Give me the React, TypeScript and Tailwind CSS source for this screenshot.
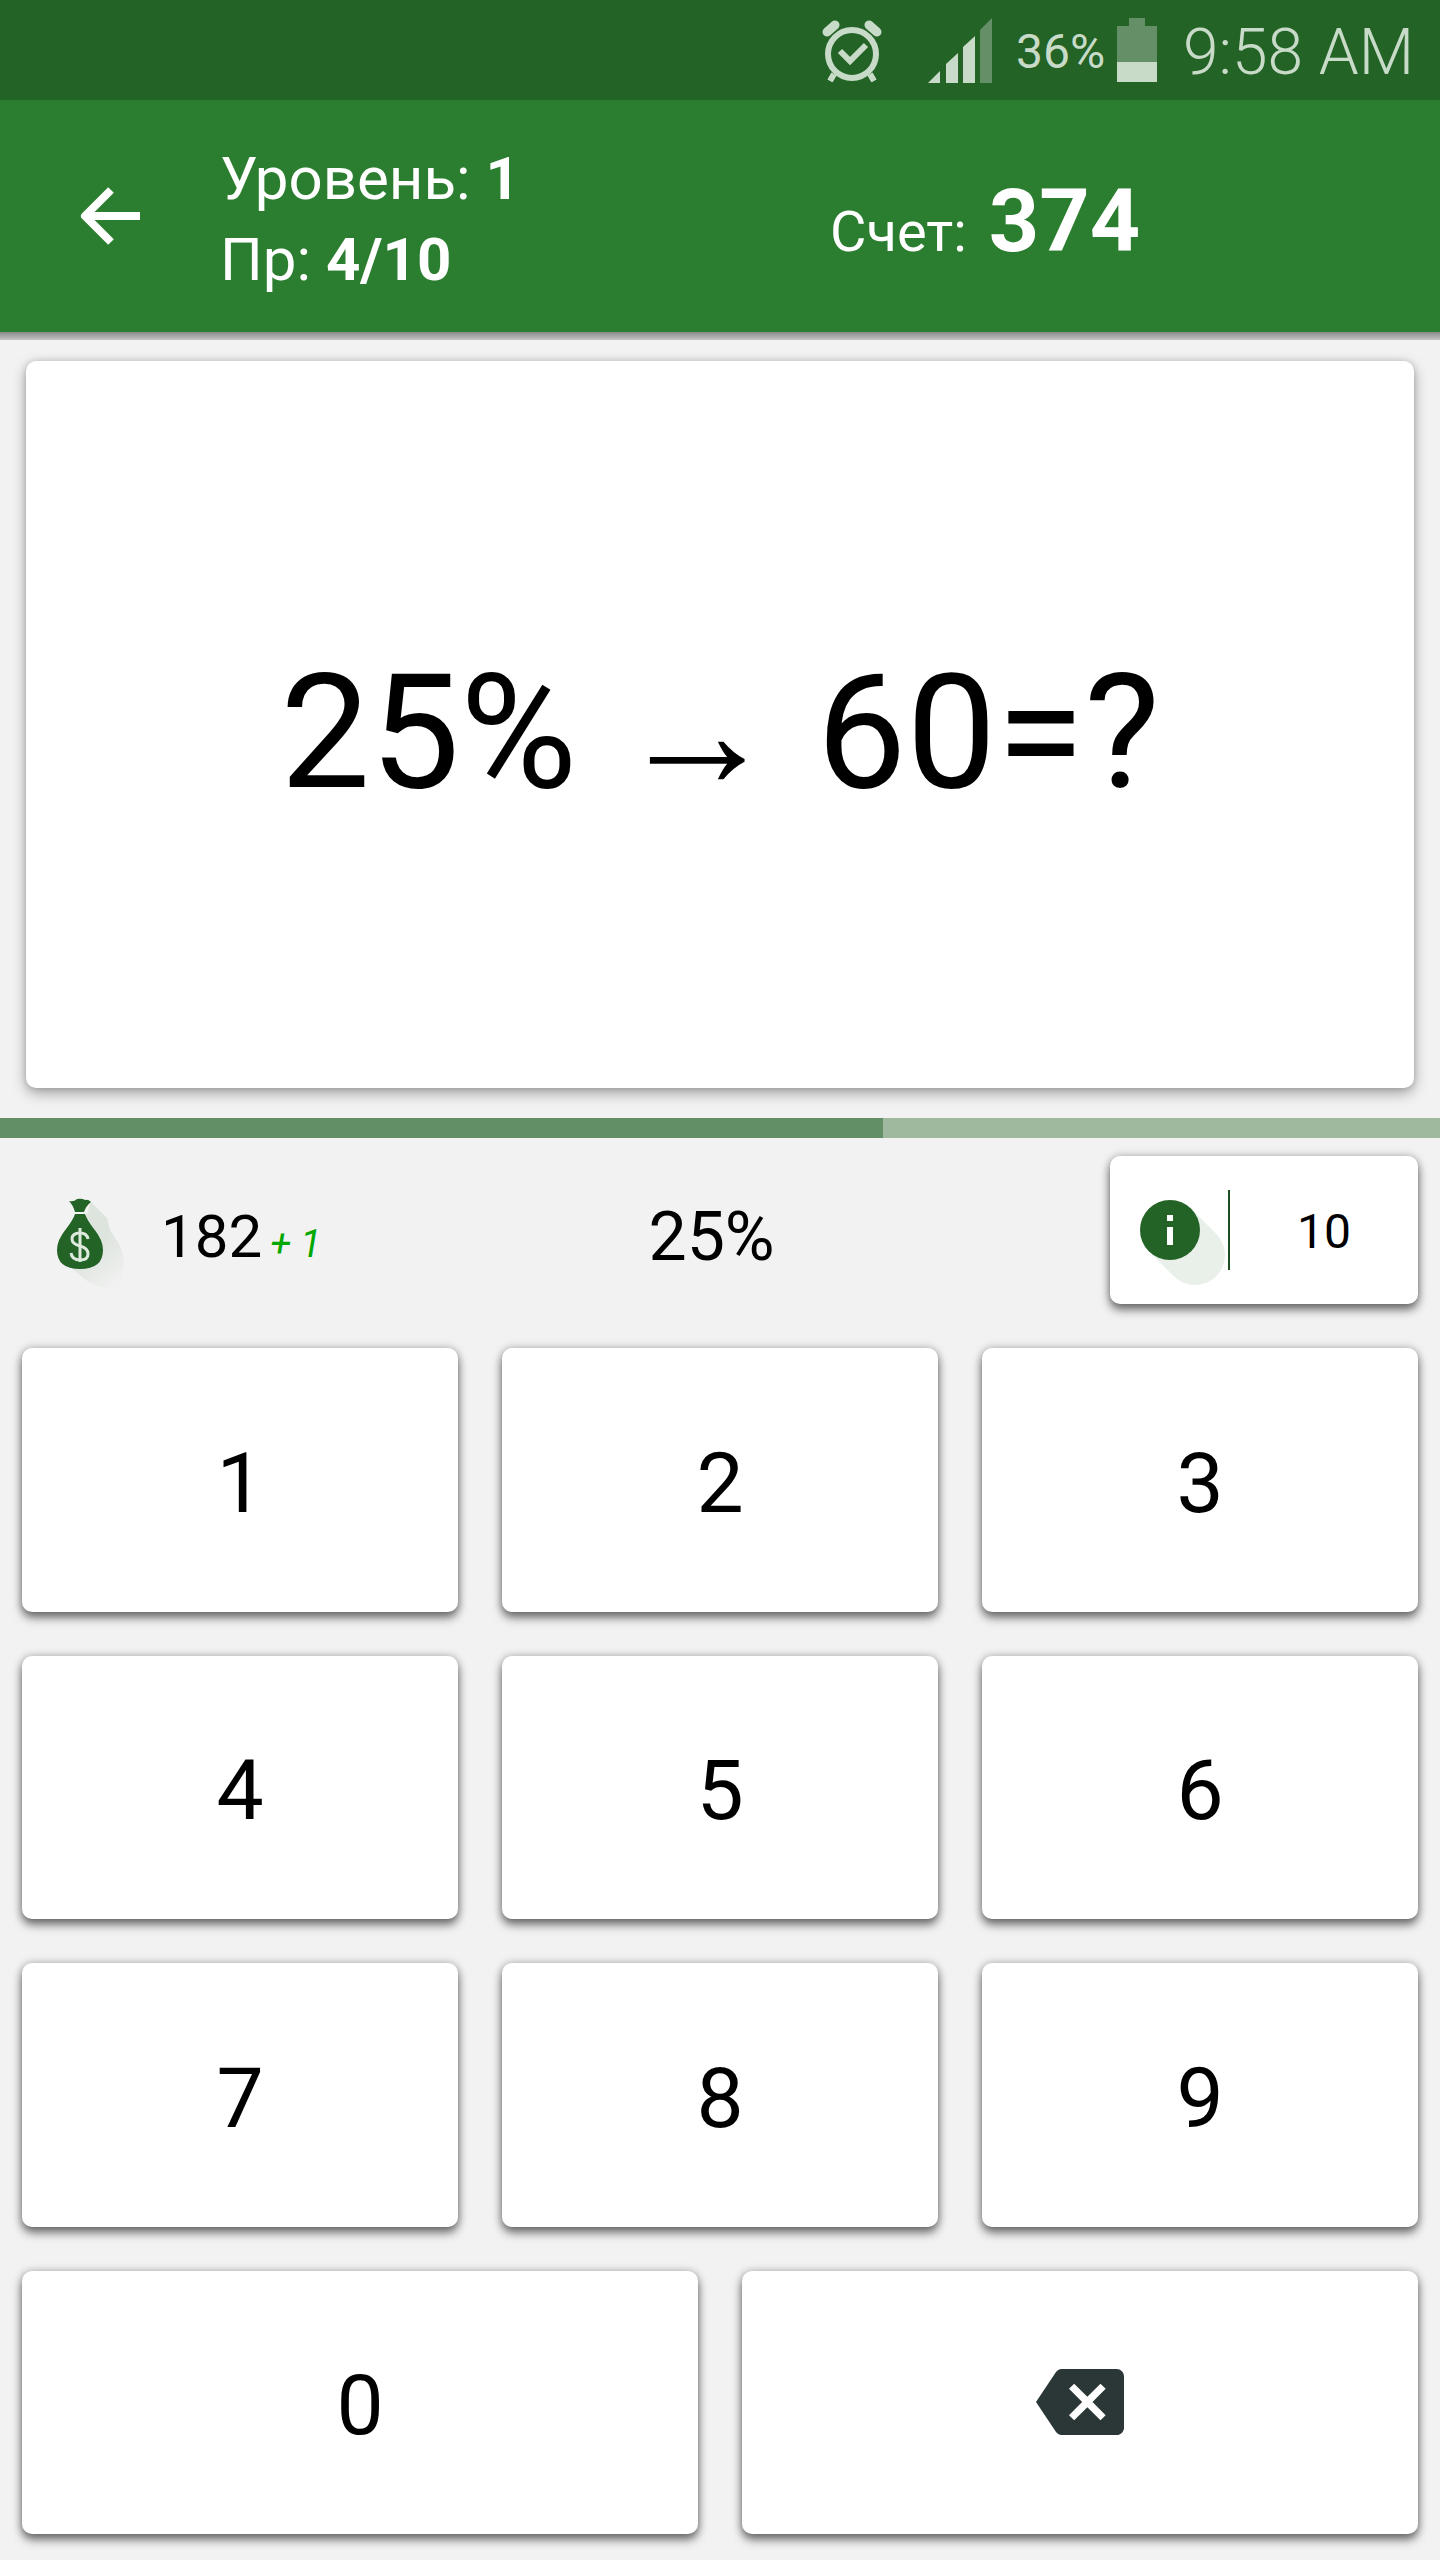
import React, { useState } from 'react';
import { MdBackspace } from 'react-icons/md';

const DIGITS = ["1", "2", "3", "4", "5", "6", "7", "8", "9"];

const KEY_CLASS = "flex items-center justify-center bg-white rounded-[10px] text-[84px] leading-none shadow-[0_6px_10px_rgba(0,0,0,0.5),0_0_8px_rgba(0,0,0,0.26)] active:bg-gray-100";

function AlarmIcon() {
  return (
    <svg width="60" height="64" viewBox="0 0 60 64" fill="none" stroke="#c8dac8" aria-hidden="true">
      <ellipse cx="30" cy="36" rx="24" ry="24" strokeWidth="6" />
      <path d="M18 33l10 10 16-16" strokeWidth="6" />
      <path d="M12 56l-4 7M48 56l4 7" strokeWidth="6" />
      <path d="M5 14L13 7M55 14L47 7" strokeWidth="9" strokeLinecap="round" />
    </svg>
  );
}

function SignalIcon() {
  return (
    <svg width="64" height="65" viewBox="0 0 64 65" fill="#c8dac8" aria-hidden="true">
      <path d="M0 65L12 53V65Z" />
      <path d="M18 65V46L30 35V65Z" />
      <path d="M35 65V29L47 18V65Z" />
      <path d="M52 65V12L64 0V65Z" fill="#648f67" />
    </svg>
  );
}

function BatteryIcon() {
  return (
    <svg width="40" height="64" viewBox="0 0 40 64" aria-hidden="true">
      <path d="M12 0H28V8H40V44H0V8H12Z" fill="#648f67" />
      <path d="M0 44H40V64H0Z" fill="#c8dac8" />
    </svg>
  );
}

function MoneyBagIcon() {
  return (
    <svg width="76" height="124" viewBox="0 0 76 124" aria-hidden="true">
      <defs>
        <linearGradient id="bagShade" x1="24" y1="66" x2="62" y2="112" gradientUnits="userSpaceOnUse">
          <stop offset="0.3" stopColor="#236326" stopOpacity="0.1" />
          <stop offset="1" stopColor="#236326" stopOpacity="0.01" />
        </linearGradient>
      </defs>
      <path d="M34 34L50 50L53 62L62 76Q72 96 62 119Q44 122 30 113L12 98Z" fill="url(#bagShade)" />
      <path d="M12 33Q17 34 20 31Q25 30 28 32Q31 31 34 34Q29 38 27 44H18Q16 37 12 33Z" fill="#236326" />
      <path d="M18 46H28Q30 52 37 61Q46 72 46 82Q46 101 23 101Q0 101 0 82Q0 72 9 61Q16 52 18 46Z" fill="#236326" />
      <g fill="none" stroke="#dfeade" strokeWidth="3">
        <path d="M31 71Q30 65 23 65Q15 65 15 71Q15 76 23 78Q31 80 31 86Q31 92 23 92Q15 92 14 85" />
        <path d="M23 60V94" />
      </g>
    </svg>
  );
}

function InfoIcon() {
  return (
    <svg width="86" height="116" viewBox="0 0 86 116" aria-hidden="true">
      <path d="M30 58L55 83" stroke="#e8f0e9" strokeWidth="60" strokeLinecap="round" />
      <circle cx="30" cy="58" r="30" fill="#236326" />
      <path d="M27 43H33V49H27ZM27 55H33V73H27Z" fill="#fff" />
    </svg>
  );
}

export default function App() {
  const [answer, setAnswer] = useState("25%");
  const progress = 61.3;

  const pressDigit = (digit: string) => {
    setAnswer(prev => (prev === "25%" ? digit : prev + digit));
  };

  return (
    <div className="min-h-screen flex flex-col bg-[#f2f2f2] text-black font-['Roboto',sans-serif]">
      {/* Status bar */}
      <div className="h-[100px] flex items-center justify-end pr-[26px] bg-[#236326] text-[#c8dac8]">
        <AlarmIcon />
        <div className="ml-[46px]"><SignalIcon /></div>
        <span className="ml-6 pt-1 text-[48px] leading-none">36%</span>
        <div className="ml-3"><BatteryIcon /></div>
        <span className="ml-[26px] pt-1.5 text-[64px] leading-none font-light">9:58 AM</span>
      </div>

      {/* App bar */}
      <header className="h-[232px] flex items-center pl-20 bg-[#2b7e2f] text-white">
        <button type="button" aria-label="Назад" className="w-[60px] mr-20">
          <svg width="60" height="60" viewBox="0 0 60 60" fill="none" stroke="#fff" strokeWidth="8" aria-hidden="true">
            <path d="M31 4L5 30L31 56" strokeLinejoin="round" />
            <path d="M6 30H60" />
          </svg>
        </button>
        <div className="flex-1 pt-1.5 text-[60px] leading-[81px]">
          <p>Уровень: <b>1</b></p>
          <p>Пр: <b>4/10</b></p>
        </div>
        <div className="flex-1 flex items-baseline gap-[22px] pt-5 leading-[88px]">
          <span className="text-[56px]">Счет:</span>
          <b className="text-[88px]">374</b>
        </div>
      </header>
      <div className="h-2 bg-linear-to-b from-[#8a8a8a] to-[#c4c4c4]" />

      {/* Question */}
      <main className="flex-1 flex flex-col">
        <div className="h-[727px] flex items-center justify-center mt-[21px] mx-[26px] pt-4 bg-white rounded-[10px] text-[160px] leading-none shadow-[0_5px_14px_rgba(0,0,0,0.34),0_0_6px_rgba(0,0,0,0.14)]">
          <p>25% <span className="font-['Liberation_Serif',serif]">→</span> 60=?</p>
        </div>

        <div role="progressbar" aria-label="Время" aria-valuenow={progress} className="h-5 mt-[30px] bg-[#9fb99f]">
          <div className="h-full bg-[#628f66]" style={{ width: `${progress}%` }} />
        </div>

        {/* Coins, current answer, hint */}
        <div className="flex items-center mt-[18px] mb-11 pl-[57px] pr-[22px]">
          <MoneyBagIcon />
          <p className="ml-7 pt-3.5 text-[60px] leading-none">
            182<i className="ml-2 text-[38px] text-[#00a800]">+ 1</i>
          </p>
          <p className="flex-1 pt-3.5 pr-2 text-center text-[68px] leading-none">{answer}</p>
          <button type="button" className="w-[308px] h-[148px] flex items-center pl-[30px] bg-white rounded-[10px] text-[48px] leading-none shadow-[0_6px_10px_rgba(0,0,0,0.5),0_0_8px_rgba(0,0,0,0.26)]">
            <InfoIcon />
            <span className="w-0.5 h-20 ml-0.5 bg-[#1c4d20]" />
            <span className="flex-1 pt-1 text-center">10</span>
          </button>
        </div>

        {/* Keypad */}
        <div className="flex-1 grid grid-cols-6 auto-rows-fr gap-11 mx-[22px] mb-[26px]">
          {DIGITS.map(digit => (
            <button key={digit} type="button" onClick={() => pressDigit(digit)} className={`col-span-2 pt-2 ${KEY_CLASS}`}>
              {digit}
            </button>
          ))}
          <button type="button" onClick={() => pressDigit("0")} className={`col-span-3 pt-2 ${KEY_CLASS}`}>0</button>
          <button type="button" aria-label="Стереть" onClick={() => setAnswer(prev => prev.slice(0, -1))} className={`col-span-3 ${KEY_CLASS}`}>
            <MdBackspace className="size-[88px] text-[#2b3637]" />
          </button>
        </div>
      </main>
    </div>
  );
}
